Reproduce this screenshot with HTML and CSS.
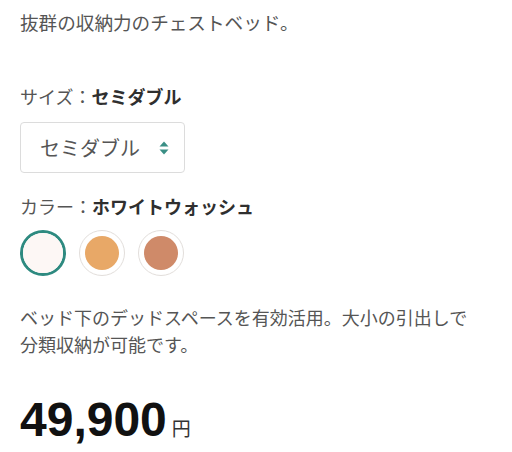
FILE: index.html
```html
<!DOCTYPE html>
<html lang="ja">
<head>
<meta charset="utf-8">
<link rel="stylesheet" href="styles.css">
</head>
<body>
<div class="product">
  <p class="lead">抜群の収納力のチェストベッド。</p>

  <div class="option option-size">
    <div class="label">サイズ：<strong>セミダブル</strong></div>
    <div class="select">
      <span class="select-value">セミダブル</span>
      <svg class="select-icon" width="10" height="14" viewBox="0 0 10 14" aria-hidden="true">
        <path d="M5 0.5 L9.5 5.5 L0.5 5.5 Z" fill="#3a8f85"/>
        <path d="M0.5 8.5 L9.5 8.5 L5 13.5 Z" fill="#3a8f85"/>
      </svg>
    </div>
  </div>

  <div class="option option-color">
    <div class="label">カラー：<strong>ホワイトウォッシュ</strong></div>
    <div class="swatches">
      <span class="swatch is-selected"><span class="swatch-dot dot-white"></span></span>
      <span class="swatch"><span class="swatch-dot dot-orange"></span></span>
      <span class="swatch"><span class="swatch-dot dot-brown"></span></span>
    </div>
  </div>

  <p class="desc">ベッド下のデッドスペースを有効活用。大小の引出しで<br>分類収納が可能です。</p>

  <div class="price"><span class="price-num">49,900</span><span class="price-unit">円</span></div>
</div>
</body>
</html>
```

FILE: styles.css
```css
* {
  box-sizing: border-box;
}

html, body {
  margin: 0;
  padding: 0;
  background: #ffffff;
}

body {
  font-family: "Noto Sans CJK JP", "Noto Sans", sans-serif;
  color: #555555;
  font-size: 18px;
  line-height: 27px;
}

.product {
  padding: 8px 20px 0 20px;
}

.lead {
  margin: 0;
  font-size: 18.6px;
}

.option-size {
  margin-top: 48px;
}

.label {
  color: #555555;
}

.label strong {
  color: #2f2f2f;
  font-weight: 700;
}

.select {
  margin-top: 12px;
  width: 165px;
  height: 51px;
  border: 1px solid #dcdcdc;
  border-radius: 4px;
  display: flex;
  align-items: center;
  justify-content: space-between;
  padding: 0 15px 0 19px;
  background: #ffffff;
}

.select-value {
  font-size: 20px;
  color: #555555;
}

.select-icon {
  display: block;
}

.option-color {
  margin-top: 20px;
}

.swatches {
  margin-top: 10px;
  display: flex;
  gap: 13px;
}

.swatch {
  width: 46px;
  height: 46px;
  border-radius: 50%;
  border: 1.5px solid #e2dedb;
  display: flex;
  align-items: center;
  justify-content: center;
  background: #ffffff;
}

.swatch.is-selected {
  border: 3px solid #2e8a80;
}

.swatch-dot {
  width: 34px;
  height: 34px;
  border-radius: 50%;
  display: block;
}

.swatch.is-selected .swatch-dot {
  width: 40px;
  height: 40px;
}

.dot-white {
  background: #fdf7f5;
}

.dot-orange {
  background: #e8a867;
}

.dot-brown {
  background: #cf8a69;
}

.desc {
  margin: 28px 0 0 0;
}

.price {
  margin-top: 34px;
  display: flex;
  align-items: baseline;
  line-height: 56px;
}

.price-num {
  font-family: "Liberation Sans", Arial, sans-serif;
  font-weight: 700;
  font-size: 48px;
  color: #111111;
}

.price-unit {
  margin-left: 5px;
  font-size: 19px;
  color: #333333;
  font-weight: 400;
}
```
